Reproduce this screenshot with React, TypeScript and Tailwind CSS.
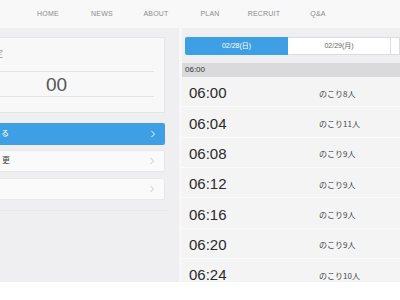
import React from "react";

const nav = ["HOME", "NEWS", "ABOUT", "PLAN", "RECRUIT", "Q&A"];

type Slot = { time: string; left: number };

const slots: Slot[] = [
  { time: "06:00", left: 8 },
  { time: "06:04", left: 11 },
  { time: "06:08", left: 9 },
  { time: "06:12", left: 9 },
  { time: "06:16", left: 9 },
  { time: "06:20", left: 9 },
  { time: "06:24", left: 10 },
];

function Chevron({ className }: { className?: string }) {
  return (
    <svg className={className} width="6" height="8" viewBox="0 0 6 8" fill="none">
      <path d="M1.5 1l3 3-3 3" stroke="currentColor" strokeWidth="1" />
    </svg>
  );
}

export default function App() {
  return (
    <div className="w-[400px] h-[300px] bg-white overflow-hidden font-['Liberation_Sans','Noto_Sans_CJK_JP',sans-serif]">
      {/* Header nav */}
      <div className="h-[28px] bg-[#f8f8f8] flex items-center pl-[21px]">
        {nav.map((n) => (
          <div key={n} className="w-[54px] text-center text-[7px] tracking-[0.2px] text-[#8a8a8a]">
            {n}
          </div>
        ))}
      </div>

      <div className="h-[254px] bg-[#efeff1] flex overflow-hidden">
        {/* Left column */}
        <div className="w-[179px] shrink-0 pt-[9px] overflow-hidden">
          <div className="-ml-[20px] w-[185px]">
            <div className="h-[76px] bg-[#f8f8f9] border border-[#e6e6e8] flex flex-col">
              <div className="h-[34px] pl-[13px] flex items-center text-[9px] text-[#999] pr-[10px] border-b border-[#e2e2e4] mr-[10px]">
                定
              </div>
              <div className="h-[25px] pl-[65px] pt-[2px] flex items-center text-[19px] text-[#555] border-b border-[#e2e2e4] mr-[10px]">
                00
              </div>
            </div>
            <div className="mt-[10px] h-[22px] bg-[#3f9fe5] rounded-[2px] flex items-center justify-between pl-[21px] pr-[9px] text-white text-[8px]">
              <span>る</span>
              <Chevron className="text-white" />
            </div>
            <div className="mt-[5px] h-[22px] bg-[#fafafb] border border-[#e9e9eb] rounded-[2px] flex items-center justify-between pl-[21px] pr-[9px] text-[#444] text-[8px]">
              <span>更</span>
              <Chevron className="text-[#c8c8c8]" />
            </div>
            <div className="mt-[6px] h-[22px] bg-[#fafafb] border border-[#e9e9eb] rounded-[2px] flex items-center justify-end pr-[9px]">
              <Chevron className="text-[#c8c8c8]" />
            </div>
            <div className="mt-[10px] border-t border-[#e8e8ea] mr-[-3px]" />
          </div>
        </div>

        {/* Divider */}
        <div className="w-[3px] shrink-0 bg-[#f7f7f8]" />

        {/* Right column */}
        <div className="flex-1 min-w-0 pt-[9px]">
          <div className="flex h-[18px] pl-[3px]">
            <div className="w-[103px] shrink-0 bg-[#3f9fe5] flex items-center justify-center text-white text-[7px] rounded-l-[2px]">
              02/28(日)
            </div>
            <div className="w-[102px] shrink-0 bg-white border-y border-[#dcdcdf] flex items-center justify-center text-[#666] text-[7px]">
              02/29(月)
            </div>
            <div className="flex-1 bg-white border border-[#dcdcdf]" />
          </div>

          <div className="mt-[8px] h-[14px] bg-[#dadadc] flex items-center pl-[3px] text-[8px] text-[#333]">
            06:00
          </div>

          <div className="flex flex-col">
            {slots.map((s) => (
              <div
                key={s.time}
                className="h-[30.33px] shrink-0 bg-[#f4f4f5] border-b border-[#fbfbfc] flex items-center pt-[4px]"
              >
                <div className="w-[137px] pl-[7px] text-[15px] text-[#2a2a2a]">{s.time}</div>
                <div className="text-[8px] text-[#444] font-['Noto_Sans_CJK_JP',sans-serif]">
                  のこり{s.left}人
                </div>
              </div>
            ))}
          </div>
        </div>
      </div>
    </div>
  );
}
